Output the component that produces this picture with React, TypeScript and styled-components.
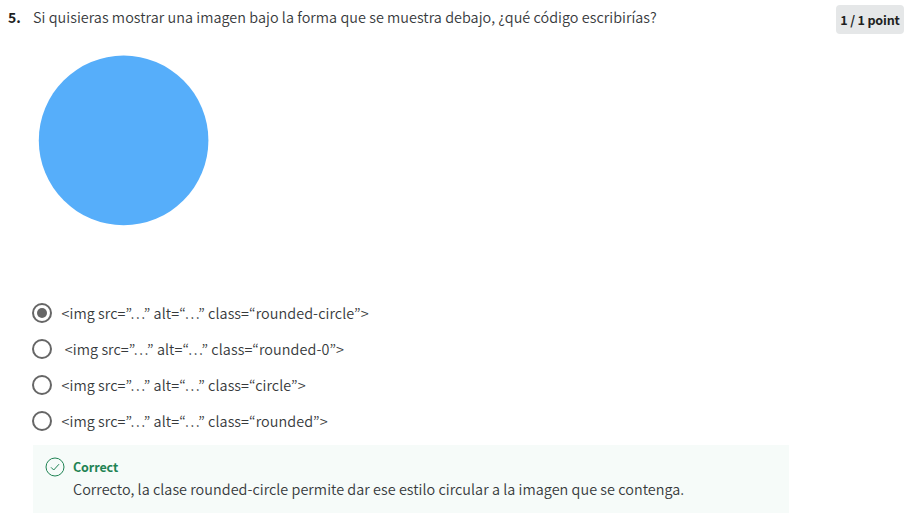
import React from "react";
import styled, { createGlobalStyle } from "styled-components";

const GlobalStyle = createGlobalStyle`
  *, *::before, *::after { box-sizing: border-box; }
  body {
    margin: 0;
    background: #fff;
    color: #373a3c;
    font-family: "Noto Sans CJK KR", "Noto Sans", sans-serif;
    font-size: 14.4px;
    font-weight: 350;
    line-height: 24px;
  }
`;

const Page = styled.main`
  height: 521px;
  padding: 5px 4px 0 8px;
  overflow: hidden;
`;

const Header = styled.header`
  display: flex;
  align-items: flex-start;
  height: 51px;
`;

const QuestionNumber = styled.span`
  width: 25px;
  font-size: 14px;
  font-weight: 700;
  color: #1f1f1f;
`;

const Text = styled.span<{ $spacing?: number }>`
  display: block;
  letter-spacing: ${(p) => p.$spacing ?? 0.036}px;
  white-space: pre;
`;

const Points = styled.div`
  width: 68px;
  height: 29px;
  margin-left: auto;
  border-radius: 4px;
  background: #e5e7e8;
  color: #1f1f1f;
  font-size: 12.6px;
  font-weight: 700;
  line-height: 29px;
  letter-spacing: -0.2px;
  text-align: center;
  white-space: nowrap;
`;

const Shape = styled.svg`
  display: block;
  margin: -1px 0 0 30px;
`;

const Options = styled.div`
  display: flex;
  flex-direction: column;
  margin: 68px 0 0 24px;
`;

const Option = styled.label`
  display: flex;
  align-items: center;
  gap: 9.5px;
  height: 36px;
`;

const Radio = styled.span<{ $checked: boolean }>`
  display: grid;
  place-items: center;
  width: 20px;
  height: 20px;
  border: 2px solid #666;
  border-radius: 50%;

  &::after {
    content: "";
    width: 10px;
    height: 10px;
    border-radius: 50%;
    background: ${(p) => (p.$checked ? "#666" : "transparent")};
  }
`;

const Feedback = styled.section`
  display: flex;
  gap: 8px;
  width: 756px;
  height: 68px;
  margin: 6px 0 0 25px;
  padding: 12px 0 0 12px;
  background: #f6fbf9;
`;

const FeedbackTitle = styled.div`
  height: 20px;
  color: #1f8354;
  font-size: 12.5px;
  font-weight: 700;
  line-height: 20px;
  letter-spacing: -0.1px;
`;

const options = [
  { text: "<img src=”…” alt=“…” class=“rounded-circle”>", checked: true },
  { text: " <img src=”…” alt=“…” class=“rounded-0”>", checked: false },
  { text: "<img src=”…” alt=“…” class=“circle”>", checked: false },
  { text: "<img src=”…” alt=“…” class=“rounded”>", checked: false },
];

const CheckIcon = () => (
  <svg width="20" height="20" viewBox="0 0 20 20" fill="none" stroke="#1f8354">
    <circle cx="10" cy="10" r="9" />
    <path d="M6 10.3l2.7 2.7L14 7.2" />
  </svg>
);

export default function App() {
  return (
    <Page>
      <GlobalStyle />
      <Header>
        <QuestionNumber>5.</QuestionNumber>
        <Text>
          Si quisieras mostrar una imagen bajo la forma que se muestra debajo, ¿qué código escribirías?
        </Text>
        <Points>1 / 1 point</Points>
      </Header>
      <Shape width="172" height="172" viewBox="0 0 172 172">
        <circle cx="85.6" cy="85.4" r="84.8" fill="#56aefa" />
      </Shape>
      <Options>
        {options.map((o) => (
          <Option key={o.text}>
            <Radio $checked={o.checked} />
            <Text $spacing={0.07}>{o.text}</Text>
          </Option>
        ))}
      </Options>
      <Feedback>
        <CheckIcon />
        <div>
          <FeedbackTitle>Correct</FeedbackTitle>
          <Text>
            Correcto, la clase rounded-circle permite dar ese estilo circular a la imagen que se contenga.
          </Text>
        </div>
      </Feedback>
    </Page>
  );
}
